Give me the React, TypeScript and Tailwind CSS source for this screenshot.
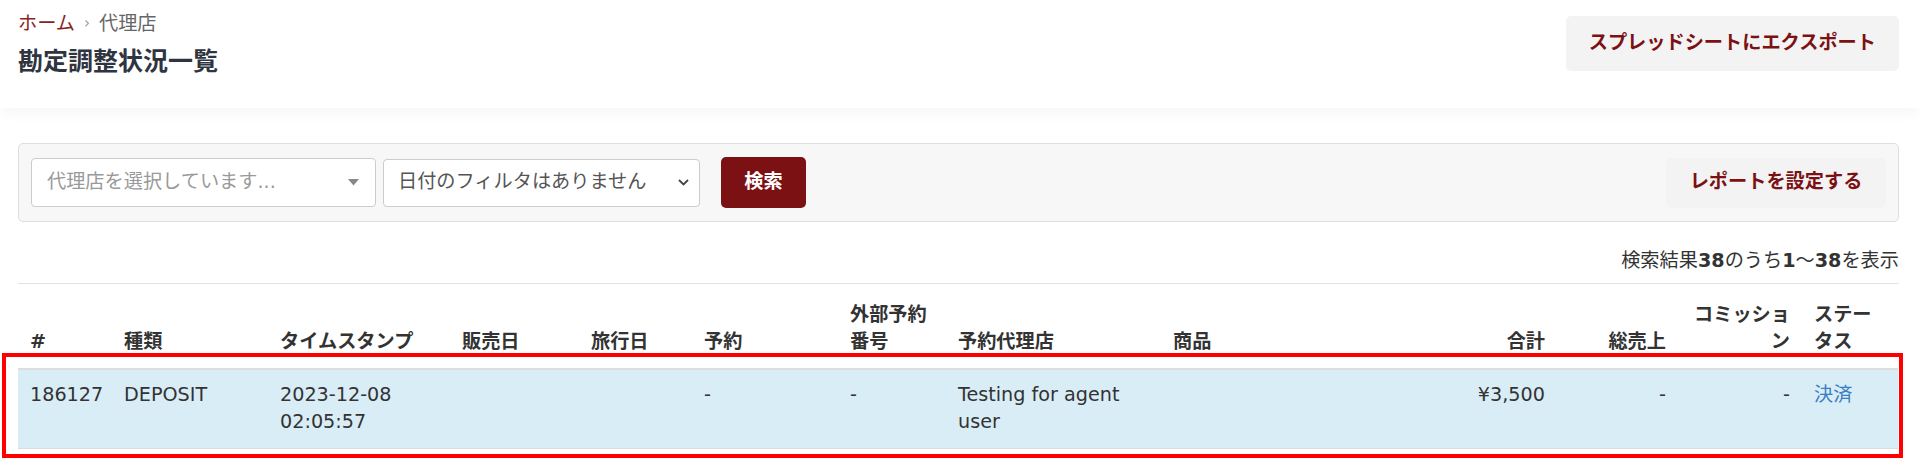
import React from "react";

const cols = [94, 156, 182, 129, 113, 146, 108, 215, 239, 157, 121, 124, 96];

export default function App() {
  return (
    <div className="min-h-screen bg-white text-[#333] font-[family-name:'DejaVu_Sans','Noto_Sans_CJK_JP',sans-serif]">
      <header className="flex h-[108px] items-start justify-between bg-white pl-[18px] pr-[21px] pt-[10px] shadow-[0_6px_12px_rgba(0,0,0,0.035)]">
        <div>
          <nav className="flex items-center text-[19.2px] leading-[27px]">
            <a className="text-[#8b1e1e]">ホーム</a>
            <span className="mx-[9px] text-[15px] text-[#999]">›</span>
            <span className="text-[#666]">代理店</span>
          </nav>
          <h1 className="mt-[8px] text-[25px] font-bold leading-[34px] text-[#2f3540]">勘定調整状況一覧</h1>
        </div>
        <button className="mt-[6px] h-[55px] rounded-[5px] bg-[#f3f3f3] px-[23px] text-[19.2px] font-bold text-[#7b1113]">
          スプレッドシートにエクスポート
        </button>
      </header>

      <main className="pl-[18px] pr-[21px]">
        <div className="mt-[35px] flex h-[79px] items-center justify-between rounded-[5px] border border-[#dedede] bg-[#f7f7f7] px-[12px]">
          <div className="flex items-center">
            <div className="flex h-[49px] w-[345px] items-center justify-between rounded-[4px] border border-[#cccccc] bg-white pl-[15px] pr-[16px]">
              <span className="text-[19.2px] text-[#999]">代理店を選択しています...</span>
              <svg width="11" height="7" viewBox="0 0 11 7">
                <path d="M0 0 L11 0 L5.5 6.5 Z" fill="#888" />
              </svg>
            </div>
            <div className="ml-[7px] flex h-[48px] w-[317px] items-center justify-between rounded-[4px] border border-[#cccccc] bg-white pl-[14px] pr-[10px]">
              <span className="text-[19.2px] text-[#555]">日付のフィルタはありません</span>
              <svg width="11" height="7" viewBox="0 0 11 7">
                <path d="M1 1 L5.5 5.5 L10 1" fill="none" stroke="#444" strokeWidth="1.8" />
              </svg>
            </div>
            <button className="ml-[21px] h-[51px] w-[85px] rounded-[5px] bg-[#7b1113] text-[19.2px] font-bold text-white">
              検索
            </button>
          </div>
          <button className="h-[50px] w-[220px] rounded-[5px] bg-[#f3f3f3] text-[19.2px] font-bold text-[#7b1113]">
            レポートを設定する
          </button>
        </div>

        <div className="mt-[25px] text-right text-[19.2px] leading-[27px]">
          検索結果<b>38</b>のうち<b>1</b>〜<b>38</b>を表示
        </div>

        <div className="relative mt-[9px] border-t border-[#e2e2e2]">
          <table className="w-[1880px] table-fixed border-collapse text-[19.2px] leading-[27px]">
            <colgroup>
              {cols.map((w, i) => (
                <col key={i} style={{ width: w }} />
              ))}
            </colgroup>
            <thead>
              <tr className="border-b-2 border-[#dddddd] align-bottom font-bold">
                <th className="px-[12px] pb-[13px] pt-[17px] text-left">#</th>
                <th className="px-[12px] pb-[13px] pt-[17px] text-left">種類</th>
                <th className="px-[12px] pb-[13px] pt-[17px] text-left">タイムスタンプ</th>
                <th className="px-[12px] pb-[13px] pt-[17px] text-left">販売日</th>
                <th className="px-[12px] pb-[13px] pt-[17px] text-left">旅行日</th>
                <th className="px-[12px] pb-[13px] pt-[17px] text-left">予約</th>
                <th className="px-[12px] pb-[13px] pt-[17px] text-left">外部予約番号</th>
                <th className="px-[12px] pb-[13px] pt-[17px] text-left">予約代理店</th>
                <th className="px-[12px] pb-[13px] pt-[17px] text-left">商品</th>
                <th className="px-[12px] pb-[13px] pt-[17px] text-right">合計</th>
                <th className="px-[12px] pb-[13px] pt-[17px] text-right">総売上</th>
                <th className="px-[12px] pb-[13px] pt-[17px] text-right">コミッション</th>
                <th className="px-[12px] pb-[13px] pt-[17px] text-left">ステータス</th>
              </tr>
            </thead>
            <tbody>
              <tr className="border-b border-[#dcdcdc] bg-[#d9edf7] align-top">
                <td className="px-[12px] pb-[13px] pt-[11px]">186127</td>
                <td className="px-[12px] pb-[13px] pt-[11px]">DEPOSIT</td>
                <td className="px-[12px] pb-[13px] pt-[11px]">2023-12-08 02:05:57</td>
                <td className="px-[12px] pb-[13px] pt-[11px]"></td>
                <td className="px-[12px] pb-[13px] pt-[11px]"></td>
                <td className="px-[12px] pb-[13px] pt-[11px]">-</td>
                <td className="px-[12px] pb-[13px] pt-[11px]">-</td>
                <td className="px-[12px] pb-[13px] pt-[11px]">Testing for agent user</td>
                <td className="px-[12px] pb-[13px] pt-[11px]"></td>
                <td className="px-[12px] pb-[13px] pt-[11px] text-right">¥3,500</td>
                <td className="px-[12px] pb-[13px] pt-[11px] text-right">-</td>
                <td className="px-[12px] pb-[13px] pt-[11px] text-right">-</td>
                <td className="px-[12px] pb-[13px] pt-[11px]">
                  <a className="text-[#3a7fc1]">決済</a>
                </td>
              </tr>
            </tbody>
          </table>
          <div className="pointer-events-none absolute left-[-16px] top-[69px] h-[105px] w-[1901px] border-[4px] border-[#ff0000]" />
        </div>
      </main>
    </div>
  );
}
